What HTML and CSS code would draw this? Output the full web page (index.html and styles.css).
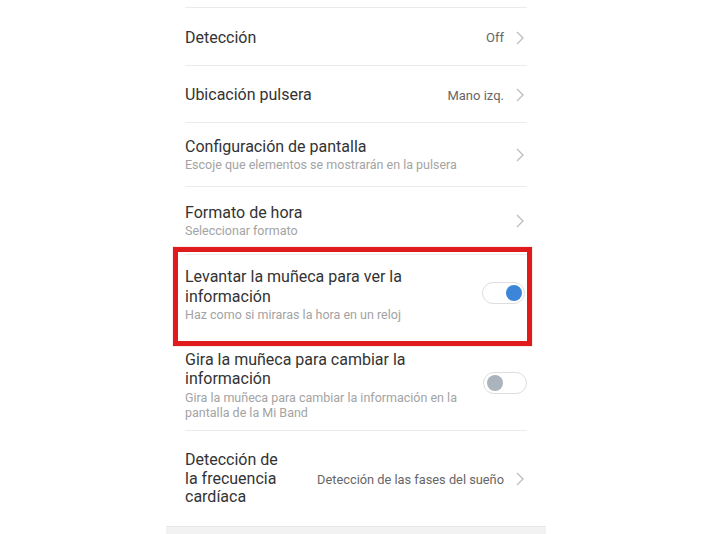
FILE: index.html
```html
<!DOCTYPE html>
<html lang="es">
<head>
<meta charset="utf-8">
<link rel="stylesheet" href="styles.css">
</head>
<body>
<div class="panel">
  <div class="row row-top"></div>
  <div class="row r1">
    <div class="text"><div class="title">Detección</div></div>
    <div class="value">Off</div>
    <svg class="chev" width="10" height="14" viewBox="0 0 10 14"><polyline points="2,1 8,7 2,13" fill="none" stroke="#bdbdbd" stroke-width="1.3"/></svg>
  </div>
  <div class="row r2">
    <div class="text"><div class="title">Ubicación pulsera</div></div>
    <div class="value">Mano izq.</div>
    <svg class="chev" width="10" height="14" viewBox="0 0 10 14"><polyline points="2,1 8,7 2,13" fill="none" stroke="#bdbdbd" stroke-width="1.3"/></svg>
  </div>
  <div class="row r3">
    <div class="text"><div class="title">Configuración de pantalla</div><div class="sub">Escoje que elementos se mostrarán en la pulsera</div></div>
    <svg class="chev" width="10" height="14" viewBox="0 0 10 14"><polyline points="2,1 8,7 2,13" fill="none" stroke="#bdbdbd" stroke-width="1.3"/></svg>
  </div>
  <div class="row r4">
    <div class="text"><div class="title">Formato de hora</div><div class="sub">Seleccionar formato</div></div>
    <svg class="chev" width="10" height="14" viewBox="0 0 10 14"><polyline points="2,1 8,7 2,13" fill="none" stroke="#bdbdbd" stroke-width="1.3"/></svg>
  </div>
  <div class="row r5">
    <div class="text wide"><div class="title">Levantar la muñeca para ver la información</div><div class="sub">Haz como si miraras la hora en un reloj</div></div>
    <div class="toggle on"><span class="knob"></span></div>
    <div class="highlight"></div>
  </div>
  <div class="row r6">
    <div class="text wide"><div class="title">Gira la muñeca para cambiar la información</div><div class="sub">Gira la muñeca para cambiar la información en la pantalla de la Mi Band</div></div>
    <div class="toggle off"><span class="knob"></span></div>
  </div>
  <div class="row r7">
    <div class="text narrow"><div class="title tight">Detección de la frecuencia cardíaca</div></div>
    <div class="value small">Detección de las fases del sueño</div>
    <svg class="chev" width="10" height="14" viewBox="0 0 10 14"><polyline points="2,1 8,7 2,13" fill="none" stroke="#bdbdbd" stroke-width="1.3"/></svg>
  </div>
  <div class="footer"></div>
</div>
</body>
</html>
```
FILE: styles.css
```css
html, body {
  margin: 0;
  padding: 0;
  background: #ffffff;
}
body {
  width: 719px;
  height: 534px;
  overflow: hidden;
  font-family: Roboto, "Noto Sans", sans-serif;
}
.panel {
  margin-left: 166px;
  width: 380px;
  background: #ffffff;
}
.row {
  position: relative;
  margin: 0 19px;
  display: flex;
  align-items: center;
  border-bottom: 1px solid #ebebeb;
  box-sizing: border-box;
}
.row-top { height: 8px; }
.r1 { height: 58px; padding-top: 2px; }
.r2 { height: 57px; padding-top: 2px; }
.r3 { height: 64px; }
.r4 { height: 68px; }
.r5 { height: 86px; border-bottom-color: transparent; padding-bottom: 6px; }
.r6 { height: 90px; padding-bottom: 2px; }
.r7 { height: 95px; border-bottom: none; padding-top: 1px; }
.text {
  flex: 1;
  min-width: 0;
}
.text.wide { flex: 0 0 285px; margin-right: auto; }
.text.narrow { flex: 0 0 105px; margin-right: auto; }
.title {
  font-size: 16px;
  line-height: 19.5px;
  color: #333333;
}
.title.tight { line-height: 18.5px; }
.sub {
  font-size: 12.5px;
  line-height: 15px;
  color: #a3a3a3;
  margin-top: 1px;
}
.value {
  font-size: 13px;
  color: #666666;
  margin-right: 11px;
}
.value.small { font-size: 12.8px; }
.chev {
  flex: 0 0 auto;
  margin-right: 2px;
}
.toggle {
  position: relative;
  width: 41px;
  height: 20px;
  border: 1px solid #dedede;
  border-radius: 11px;
  background: #fff;
  box-sizing: content-box;
  margin-right: 1px;
}
.r5 .toggle { margin-top: -4px; margin-right: 2px; }
.r6 .toggle { margin-top: -4px; margin-right: 0; width: 42px; }
.knob {
  position: absolute;
  top: 2px;
  width: 16px;
  height: 16px;
  border-radius: 50%;
}
.toggle.on .knob { right: 2px; background: #3b86d9; }
.toggle.off .knob { left: 3px; background: #abb3bc; }
.highlight {
  position: absolute;
  left: -12px;
  right: -5px;
  top: -8px;
  bottom: -6px;
  border: 5px solid #e01b1e;
  box-shadow: 0 0 1px rgba(224,27,30,0.5);
  pointer-events: none;
}
.footer {
  height: 12px;
  background: #f2f2f2;
  border-top: 1px solid #e6e6e6;
}
```
